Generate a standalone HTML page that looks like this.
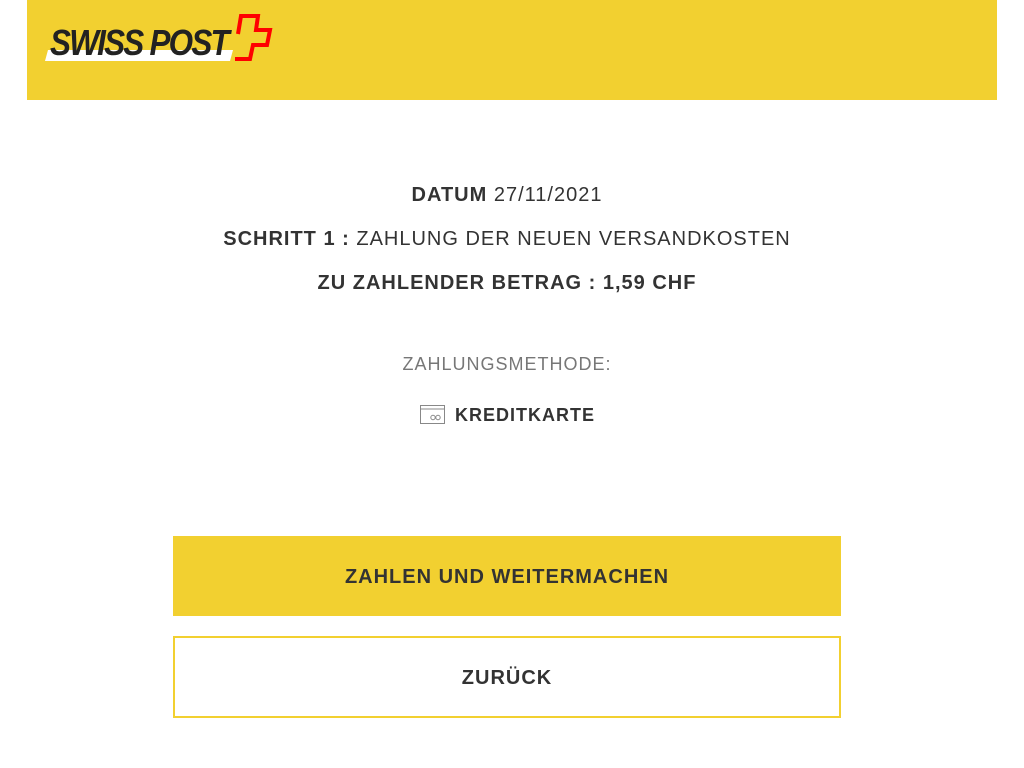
<!DOCTYPE html>
<html><head><meta charset="utf-8"><style>
body{margin:0;background:#fff;font-family:"Liberation Sans",Arial,sans-serif;color:#333;width:1024px;height:768px;overflow:hidden;position:relative}
.hdr{position:absolute;left:27px;top:0;width:970px;height:100px;background:#f2d030}
.line{position:absolute;left:-5px;width:1024px;text-align:center;font-size:20px;letter-spacing:1px}
b{font-weight:bold}
.btn{position:absolute;left:173px;width:668px;height:80px;box-sizing:border-box;text-align:center;font-weight:bold;font-size:20px;letter-spacing:1px;line-height:82px}
</style></head><body>
<div class="hdr"></div>
<svg style="position:absolute;left:0;top:0" width="300" height="70">
<polygon points="48,50 233,50 230,61 45,61" fill="#fff"/>
<text x="50" y="55" font-family="Liberation Sans" font-weight="bold" font-style="italic" font-size="36" letter-spacing="-2" textLength="178" lengthAdjust="spacingAndGlyphs" fill="#222">SWISS POST</text>
<polyline points="238,34 241,16 258,16 256,30 270,30 267,45 253,45 250,59 235,59" fill="none" stroke="#ff0000" stroke-width="4"/>
</svg>
<div class="line" style="top:184px"><b>DATUM</b> 27/11/2021</div>
<div class="line" style="top:228px"><b>SCHRITT 1 :</b> ZAHLUNG DER NEUEN VERSANDKOSTEN</div>
<div class="line" style="top:272px"><b>ZU ZAHLENDER BETRAG : 1,59 CHF</b></div>
<div class="line" style="top:354px;font-size:18px;color:#777">ZAHLUNGSMETHODE:</div>
<svg style="position:absolute;left:420px;top:405px" width="26" height="20"><rect x="0.5" y="0.5" width="24" height="18" fill="none" stroke="#888"/><line x1="1" y1="4" x2="24" y2="4" stroke="#888"/><circle cx="13" cy="12.5" r="2.2" fill="none" stroke="#888"/><circle cx="18" cy="12.5" r="2.2" fill="none" stroke="#888"/></svg>
<div style="position:absolute;left:455px;top:405px;font-size:18px;font-weight:bold;letter-spacing:1px">KREDITKARTE</div>
<div class="btn" style="top:536px;background:#f2d030">ZAHLEN UND WEITERMACHEN</div>
<div class="btn" style="top:636px;height:82px;border:2px solid #f2d030;line-height:80px">ZURÜCK</div>
</body></html>
